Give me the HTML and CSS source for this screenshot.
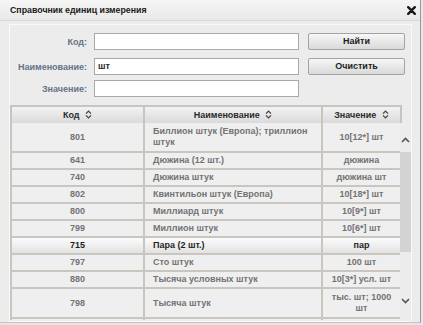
FILE: index.html
```html
<!DOCTYPE html>
<html lang="ru">
<head>
<meta charset="utf-8">
<link rel="stylesheet" href="styles.css">
</head>
<body>
<div class="dialog">
  <div class="titlebar">
    <span class="title">Справочник единиц измерения</span>
    <svg class="close" width="9" height="9" viewBox="0 0 9 9"><path d="M1.2 1.2 L7.8 7.8 M7.8 1.2 L1.2 7.8" stroke="#1a1a1a" stroke-width="2.4" stroke-linecap="round"/></svg>
  </div>
  <div class="panel">
    <div class="filter">
      <div class="frow">
        <span class="lbl">Код:</span>
        <span class="inp"></span>
        <span class="btn">Найти</span>
      </div>
      <div class="frow frow-2">
        <span class="lbl">Наименование:</span>
        <span class="inp">шт</span>
        <span class="btn">Очистить</span>
      </div>
      <div class="frow frow-3">
        <span class="lbl">Значение:</span>
        <span class="inp"></span>
      </div>
    </div>
    <div class="grid">
      <table class="head">
        <colgroup><col class="c1"><col class="c2"><col class="c3"></colgroup>
        <tr>
          <th>Код <svg class="sort" width="7" height="9" viewBox="0 0 7 9"><path d="M1 3.6 L3.5 1.1 L6 3.6 M1 5.4 L3.5 7.9 L6 5.4" fill="none" stroke="#444" stroke-width="1.3"/></svg></th>
          <th>Наименование <svg class="sort" width="7" height="9" viewBox="0 0 7 9"><path d="M1 3.6 L3.5 1.1 L6 3.6 M1 5.4 L3.5 7.9 L6 5.4" fill="none" stroke="#444" stroke-width="1.3"/></svg></th>
          <th>Значение <svg class="sort" width="7" height="9" viewBox="0 0 7 9"><path d="M1 3.6 L3.5 1.1 L6 3.6 M1 5.4 L3.5 7.9 L6 5.4" fill="none" stroke="#444" stroke-width="1.3"/></svg></th>
        </tr>
      </table>
      <div class="spacer"></div>
      <div class="viewport">
        <table class="body">
          <colgroup><col class="c1"><col class="c2"><col class="c3"></colgroup>
          <tr class="tall"><td>801</td><td class="nm">Биллион штук (Европа); триллион штук</td><td>10[12*] шт</td></tr>
          <tr><td>641</td><td class="nm">Дюжина (12 шт.)</td><td>дюжина</td></tr>
          <tr><td>740</td><td class="nm">Дюжина штук</td><td>дюжина шт</td></tr>
          <tr><td>802</td><td class="nm">Квинтильон штук (Европа)</td><td>10[18*] шт</td></tr>
          <tr><td>800</td><td class="nm">Миллиард штук</td><td>10[9*] шт</td></tr>
          <tr><td>799</td><td class="nm">Миллион штук</td><td>10[6*] шт</td></tr>
          <tr class="sel"><td>715</td><td class="nm">Пара (2 шт.)</td><td>пар</td></tr>
          <tr><td>797</td><td class="nm">Сто штук</td><td>100 шт</td></tr>
          <tr><td>880</td><td class="nm">Тысяча условных штук</td><td>10[3*] усл. шт</td></tr>
          <tr class="tall"><td>798</td><td class="nm">Тысяча штук</td><td>тыс. шт; 1000 шт</td></tr>
          <tr><td>&nbsp;</td><td class="nm">&nbsp;</td><td>&nbsp;</td></tr>
        </table>
      </div>
      <div class="scrollbar">
        <div class="sb-up"><svg width="9" height="6" viewBox="0 0 9 6"><path d="M1 5 L4.5 1.5 L8 5" fill="none" stroke="#555" stroke-width="1.6"/></svg></div>
        <div class="sb-thumb"></div>
        <div class="sb-track"></div>
        <div class="sb-down"><svg width="9" height="6" viewBox="0 0 9 6"><path d="M1 1 L4.5 4.5 L8 1" fill="none" stroke="#555" stroke-width="1.6"/></svg></div>
      </div>
    </div>
  </div>
</div>
</body>
</html>
```
FILE: styles.css
```css
html, body {
  margin: 0;
  padding: 0;
  background: #e6e6e6;
}
body {
  font-family: "Liberation Sans", Arial, sans-serif;
  font-weight: bold;
  font-size: 9px;
}
.dialog {
  width: 420px;
  height: 322px;
  background: #ececec;
  border-right: 1px solid #9a9a9a;
  border-bottom: 1px solid #c4c4c4;
  overflow: hidden;
}
.titlebar {
  height: 20px;
  display: flex;
  align-items: center;
  justify-content: space-between;
  padding: 0 4px 0 10px;
  background: linear-gradient(#f6f6f6, #e8e8e8);
  border-bottom: 1px solid #d8d8d8;
}
.title {
  font-size: 8.8px;
  color: #202020;
}
.close {
  display: block;
}
.panel {
  margin: 3px 0 0 9px;
  width: 401px;
  border: 1px solid #f9f9f9;
  padding-top: 8px;
  height: 288px;
}
.frow {
  display: flex;
  align-items: center;
  height: 17px;
}
.frow-2 { margin-top: 8px; }
.frow-3 { margin-top: 5px; }
.lbl {
  width: 77px;
  text-align: right;
  color: #637388;
}
.inp {
  box-sizing: border-box;
  width: 205px;
  height: 17px;
  margin-left: 7px;
  background: #fff;
  border: 1px solid #a9a9a9;
  color: #2a2a2a;
  padding-left: 3px;
  line-height: 15px;
}
.btn {
  box-sizing: border-box;
  width: 97px;
  height: 17px;
  margin-left: 9px;
  border: 1px solid #a3a3a3;
  border-radius: 2px;
  background: linear-gradient(#f7f7f7, #d9d9d9);
  color: #1e1e1e;
  text-align: center;
  line-height: 15px;
}
.grid {
  margin-top: 8px;
  display: grid;
  grid-template-columns: 390px 11px;
  grid-template-rows: 18px 197px;
}
table {
  table-layout: fixed;
  border-collapse: collapse;
  width: 390px;
}
.c1 { width: 133px; }
.c2 { width: 178px; }
.c3 { width: 79px; }
.head th {
  height: 16px;
  padding: 0;
  border: 2px solid #c9c5be;
  background: linear-gradient(#f3f3f3, #dadada);
  color: #2b2b2b;
  font-weight: bold;
  text-align: center;
  line-height: 14px;
}
.sort {
  vertical-align: -1px;
  margin-left: 3px;
}
.viewport {
  overflow: hidden;
}
.body td {
  border: 2px solid #cac6bf;
  border-top: none;
  padding: 2px 8px;
  height: 11px;
  line-height: 11px;
  text-align: center;
  color: #737373;
  background: #efefef;
}
.body tr.tall td {
  padding-top: 3px;
  padding-bottom: 3px;
}
.body td.nm {
  text-align: left;
  padding-left: 8px;
}
.body tr.sel td {
  background: linear-gradient(#fcfcfc, #e2e2e2);
  color: #1f1f1f;
}
.scrollbar {
  display: flex;
  flex-direction: column;
  background: #ececec;
}
.sb-up {
  height: 29px;
  display: flex;
  align-items: flex-end;
  justify-content: center;
  box-sizing: border-box;
  padding-bottom: 9px;
}
.sb-thumb {
  height: 100px;
  background: #d3d3d3;
}
.sb-track {
  flex: 1;
}
.sb-down {
  height: 36px;
  display: flex;
  align-items: flex-start;
  justify-content: center;
  padding-top: 14px;
  box-sizing: border-box;
}
```
